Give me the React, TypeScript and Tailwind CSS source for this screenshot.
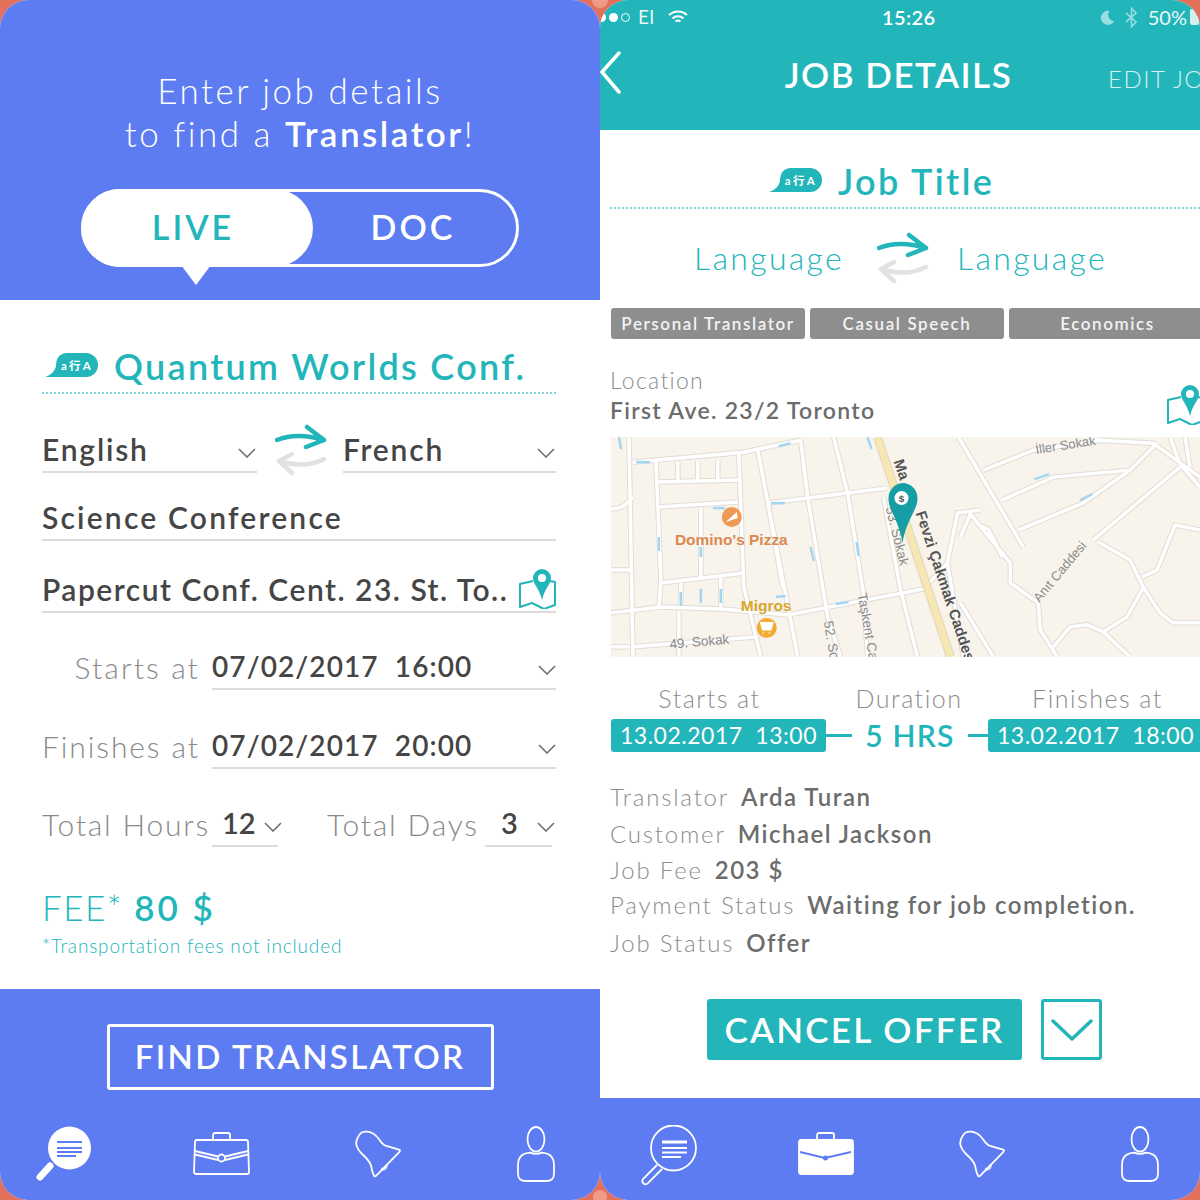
import React from 'react';

const Chevron = ({ className = 'w-[18px] h-[10px] mt-[8px]', color = '#6f6f6f' }: { className?: string; color?: string }) => (
  <svg viewBox="0 0 18 10" className={className} fill="none" stroke={color} strokeWidth="1.6">
    <path d="M1 1l8 8 8-8" />
  </svg>
);

const Bubble = () => (
  <svg viewBox="0 0 53 26" className="w-[53px] h-[26px] shrink-0">
    <path d="M22 0h19a12 12 0 0 1 0 24H0c6-2 10-6 11-11C11 5 15 0 22 0z" fill="#22b5ba" />
    <text x="32" y="16.5" textAnchor="middle" fontSize="11.5" fontWeight="700" fill="#fff" fontFamily="'Lato','Noto Sans CJK SC',sans-serif">a行A</text>
  </svg>
);

const Swap = () => (
  <svg viewBox="0 0 52 52" className="w-[52px] h-[52px] shrink-0" fill="none" strokeLinecap="round" strokeLinejoin="round" strokeWidth="4.5">
    <path d="M2 16Q22 8 49 16M32 3l17 13-18 7" stroke="#22b5ba" />
    <path d="M49 35Q30 45 4 37M17 30L4 37l13 12" stroke="#e2e2e2" />
  </svg>
);

const MapPinIcon = () => (
  <svg viewBox="0 0 38 40" className="w-[38px] h-[40px] shrink-0">
    <path d="M15 12L2 15v23l12-4 12 6 11-4V13l-5-1" fill="none" stroke="#22b5ba" strokeWidth="2" strokeLinejoin="round" />
    <path d="M24 0a9 9 0 0 1 9 9c0 6-6 10-9 22-3-12-9-16-9-22a9 9 0 0 1 9-9z" fill="#22b5ba" />
    <circle cx="24" cy="9" r="4" fill="#fff" />
  </svg>
);

const SearchIcon = ({ active }: { active: boolean }) => (
  <svg viewBox="0 0 60 70" className="w-[60px] h-[70px]" fill="none">
    {active ? (
      <>
        <ellipse cx="34.5" cy="23" rx="21.5" ry="21.5" fill="#fff" />
        <path d="M15 41L5 52" stroke="#fff" strokeWidth="7" strokeLinecap="round" />
        <path d="M22 17h25M22 23h25M22 27h25M22 31h19" stroke="#5d7cf2" strokeWidth="2" />
      </>
    ) : (
      <>
        <ellipse cx="34.5" cy="23" rx="22.5" ry="22.5" stroke="#fff" strokeWidth="1.8" />
        <path d="M18 40L4 54a3 3 0 0 0 5 4l14-14" stroke="#fff" strokeWidth="1.8" />
        <path d="M23 17h25" stroke="#fff" strokeWidth="3" />
        <path d="M23 23h25M23 27.500h25M23 32h19" stroke="#fff" strokeWidth="2" />
      </>
    )}
  </svg>
);

const CaseIcon = ({ active }: { active: boolean }) => (
  <svg viewBox="0 0 60 70" className="w-[60px] h-[70px]" fill="none" stroke="#fff" strokeWidth="1.8">
    <path d="M21 15v-5a2 2 0 0 1 2-2h13a2 2 0 0 1 2 2v5" />
    {active ? (
      <>
        <rect x="3" y="15" width="54" height="34" rx="2.5" fill="#fff" />
        <path d="M4 27l25 6 26-6" stroke="#5d7cf2" />
        <circle cx="29.5" cy="33" r="2.5" fill="#5d7cf2" stroke="none" />
      </>
    ) : (
      <>
        <path d="M5 15h49a2 2 0 0 1 2 2l1 30a2 2 0 0 1-2 2H4a2 2 0 0 1-2-2l1-30a2 2 0 0 1 2-2z" />
        <path d="M3 26l23 5.500M33 31.500L56 26M3 29.500l23 5.500M33 35L56 29.500" />
        <circle cx="29.500" cy="33" r="3.500" />
      </>
    )}
  </svg>
);

const BellIcon = () => (
  <svg viewBox="0 0 60 70" className="w-[60px] h-[70px] -ml-[2px]" fill="none" stroke="#fff" strokeWidth="1.8" strokeLinejoin="round">
    <path d="M12 9Q14 6.300 18 6.700Q25 6.300 31 14.200Q35 20.300 39 21.200L51 24.700Q53 25.500 51 27.300L28 50.800Q27 52.100 26 50.800Q24 46.400 23 40.300Q21 35.100 14 29Q6 21.200 9 14.200Q10 11.600 12 9Z" />
    <path d="M33 44.300Q38 44.700 38.500 39.900" strokeWidth="3" strokeOpacity="0.75" />
  </svg>
);

const UserIcon = () => (
  <svg viewBox="0 0 60 70" className="w-[60px] h-[70px]" fill="none" stroke="#fff" strokeWidth="1.8">
    <ellipse cx="30" cy="14.300" rx="8.500" ry="12.300" />
    <path d="M24 27.700Q30 30 36 27.700Q48 28.500 48 40.300V49Q48 56 40 56H20Q12 56 12 49V40.300Q12 28.500 24 27.700Z" />
  </svg>
);

const TabBar = ({ active }: { active: 'search' | 'jobs' }) => (
  <div className="flex justify-center h-[70px]">
    <div className="w-[157px] shrink-0 flex justify-center"><SearchIcon active={active === 'search'} /></div>
    <div className="w-[157px] shrink-0 flex justify-center"><CaseIcon active={active === 'jobs'} /></div>
    <div className="w-[157px] shrink-0 flex justify-center"><BellIcon /></div>
    <div className="w-[157px] shrink-0 flex justify-center"><UserIcon /></div>
  </div>
);

const Field = ({ className = '', children }: { className?: string; children: React.ReactNode }) => (
  <div className={`h-[46px] flex items-center border-b-2 border-[#dcdcdc] text-[#454545] font-semibold ${className}`}>
    {children}
  </div>
);

const roads = [
  'M18 0L22 220', 'M0 72C12 72 18 65 22 60', 'M0 133H20', 'M0 176L50 170L110 172L177 178L313 152L337 126',
  'M22 25L133 15L190 3', 'M45 23L50 143L48 170', 'M67 25V45', 'M87 24V44', 'M107 23V43', 'M47 45L127 43', 'M48 70L127 65',
  'M90 71V143', 'M128 15L133 150L150 220', 'M147 13L187 220', 'M190 3L197 60L217 180L230 220', 'M223 0L237 56L253 157L257 220',
  'M157 66L277 51', 'M273 60L290 153L307 220', 'M50 146L133 136', 'M70 146V172', 'M110 140V172', 'M23 210L147 200', 'M68 175V220',
  'M157 66L172 150', 'M0 210H18',
  'M348 0L413 110', 'M373 33L423 13L490 3L543 6L590 40', 'M392 63L443 40L520 33', 'M408 93L473 66L520 33L547 6',
  'M483 103L570 30', 'M350 100L360 77L400 126L400 146L428 166L430 193L447 220', 'M368 88L378 92L392 120',
  'M488 105L520 123L533 150L550 176L563 186L590 186', 'M532 140L547 133L565 88L590 93',
  'M533 151L517 180L493 195L477 188L460 190L443 210', 'M493 195L520 220', 'M570 27L590 50', 'M350 166L383 220',
  'M370 73L347 76L337 126L353 220', 'M560 0L570 27', 'M575 0L580 30', 'M480 0L490 3',
];

const arrows = ['M25 25h14', 'M160 66h14', 'M102 71h12', 'M48 100v14', 'M90 110v10', 'M200 110l3 14', 'M246 105l2 14', 'M70 155v14', 'M90 152v14', 'M110 152v14', 'M225 167l13-2', 'M165 160l10-1', 'M168 9l12-3', 'M257 0l4 12', 'M8 0l2 12', 'M424 42l15-5', 'M470 63l12-6'];

const StreetMap = () => (
  <svg viewBox="0 0 590 220" className="block w-full h-[220px]" fontFamily="'Liberation Sans',sans-serif">
    <rect width="590" height="220" fill="#f8f4ec" />
    {roads.map((d) => <path key={d} d={d} fill="none" stroke="#e0ddd6" strokeWidth="5.500" />)}
    {roads.map((d) => <path key={d + 'w'} d={d} fill="none" stroke="#ffffff" strokeWidth="3.500" />)}
    <path d="M267 0L340 220" stroke="#e3dabb" strokeWidth="9" />
    <path d="M267 0L340 220" stroke="#f6e7b4" strokeWidth="6.500" />
    {arrows.map((d) => <path key={d} d={d} stroke="#a3d6f2" strokeWidth="2.500" />)}
    <text transform="translate(283 24) rotate(71.500)" fontSize="15" fontWeight="700" fill="#555">Ma</text>
    <text transform="translate(305 76) rotate(71.500)" fontSize="15" fontWeight="700" fill="#555">Fevzi Çakmak Caddesi</text>
    <text transform="translate(275 71) rotate(76)" fontSize="13.500" fill="#8a8a8a">53. Sokak</text>
    <text transform="translate(213 185) rotate(80)" fontSize="13.500" fill="#8a8a8a">52. Sokak</text>
    <text transform="translate(247 157) rotate(80)" fontSize="13.500" fill="#8a8a8a">Taşkent Caddesi</text>
    <text transform="translate(59 212) rotate(-5)" fontSize="13.500" fill="#8a8a8a">49. Sokak</text>
    <text transform="translate(426 17) rotate(-9)" fontSize="13" fill="#8a8a8a">İller Sokak</text>
    <text transform="translate(429 166) rotate(-50)" fontSize="13" fill="#8a8a8a">Anıt Caddesi</text>
    <text x="64" y="108" fontSize="15.500" fontWeight="700" fill="#d9894f">Domino's Pizza</text>
    <text x="130" y="174" fontSize="15.500" fontWeight="700" fill="#d9a62f">Migros</text>
    <circle cx="121" cy="80" r="10" fill="#ee9a55" />
    <path d="M115 85l11-10 1 6z" fill="#fff" />
    <circle cx="156" cy="191" r="10" fill="#f2ab35" />
    <path d="M150 186h12l-2 7h-8zM152 196h1M158 196h1" fill="#fff" stroke="#fff" strokeWidth="1.500" />
    <path d="M292 46a15 15 0 0 1 15 16c0 11-11 20-15 44-4-24-14-33-14-44a15 15 0 0 1 14-16z" fill="#159ea5" />
    <circle cx="291" cy="61" r="7" fill="#fff" />
    <text x="291" y="65" textAnchor="middle" fontSize="10" fontWeight="700" fill="#555">$</text>
  </svg>
);

const InfoRow = ({ label, value }: { label: string; value: string }) => (
  <div className="flex items-center gap-[12px] text-[24px] tracking-[1.8px] leading-none">
    <span className="font-light text-[#8d8d8d]">{label}</span>
    <span className="font-semibold tracking-[1.5px] text-[#6c6c6c]">{value}</span>
  </div>
);

const Chip = ({ label, className = '' }: { label: string; className?: string }) => (
  <div className={`h-[31px] shrink-0 rounded-[3px] bg-[#8e8e8e] flex items-center justify-center text-[17px] font-semibold tracking-[1.600px] text-[#f3f3f3] ${className}`}>
    {label}
  </div>
);

const TimeChip = ({ label }: { label: string }) => (
  <div className="w-[215px] h-[33px] shrink-0 rounded-[3px] bg-[#22b5ba] flex items-center justify-center text-[23px] tracking-[0.5px] whitespace-pre text-white">
    {label}
  </div>
);

const FindForm = () => (
  <div className="relative w-[600px] h-[1200px] shrink-0 flex flex-col rounded-[28px] overflow-hidden bg-white">
    <div className="h-[300px] shrink-0 bg-[#5d7cf2] pt-[69px] flex flex-col items-center">
      <p className="text-center text-[35px] leading-[43px] font-light tracking-[2.500px] text-white">
        Enter job details<br />to find a <span className="font-semibold">Translator</span>!
      </p>
      <div className="relative mt-[34px] w-[438px] h-[78px] rounded-full border-[3px] border-white flex">
        <div className="relative -m-[3px] w-[232px] h-[78px] rounded-full bg-white flex items-center justify-center pr-[8px] pb-[3px] text-[34px] font-semibold tracking-[3px] text-[#22b5ba]">
          LIVE
          <div className="absolute left-[100px] top-[76px] w-0 h-0 border-l-[15px] border-r-[15px] border-t-[20px] border-l-transparent border-r-transparent border-t-white" />
        </div>
        <div className="flex-1 flex items-center justify-center pb-[3px] text-[34px] font-semibold tracking-[3px] text-white">DOC</div>
      </div>
    </div>

    <div className="h-[689px] shrink-0 px-[42px] pt-[45px] [&_*]:shrink-0">
      <div className="w-[514px] h-[49px] flex items-center gap-[16px] border-b-2 border-dotted border-[#7fd6d9] pl-[3px] pb-[5px] text-[36px] font-semibold tracking-[2.300px] text-[#22b5ba] whitespace-nowrap">
        <Bubble />
        <span>Quantum Worlds Conf.</span>
      </div>
      <div className="flex items-end mt-[33px] w-[514px] text-[30px] tracking-[1.800px]">
        <Field className="w-[215px] justify-between pr-[1px]"><span>English</span><Chevron /></Field>
        <div className="w-[86px] h-[46px] pl-[2px] flex items-center justify-center"><Swap /></div>
        <Field className="w-[213px] justify-between pr-[1px]"><span>French</span><Chevron /></Field>
      </div>
      <Field className="mt-[22px] w-[514px] text-[30px] tracking-[2.200px]">Science Conference</Field>
      <Field className="mt-[26px] w-[514px] justify-between text-[30px] tracking-[1.500px] whitespace-nowrap">
        <span>Papercut Conf. Cent. 23. St. To..</span>
        <MapPinIcon />
      </Field>
      <div className="mt-[31px] flex items-end w-[514px] whitespace-pre">
        <span className="w-[170px] pr-[12px] h-[46px] flex items-center justify-end text-[30px] font-light tracking-[2.100px] text-[#8a8a8a]">Starts at</span>
        <Field className="flex-1 justify-between text-[28px] tracking-[1.100px]"><span>07/02/2017  16:00</span><Chevron /></Field>
      </div>
      <div className="mt-[33px] flex items-end w-[514px] whitespace-pre">
        <span className="w-[170px] pr-[12px] h-[46px] flex items-center justify-end text-[30px] font-light tracking-[1.900px] text-[#8a8a8a]">Finishes at</span>
        <Field className="flex-1 justify-between text-[28px] tracking-[1.100px]"><span>07/02/2017  20:00</span><Chevron /></Field>
      </div>
      <div className="mt-[32px] flex items-end w-[514px] whitespace-nowrap">
        <span className="w-[170px] h-[46px] flex items-center text-[30px] font-light tracking-[1.800px] text-[#8a8a8a]">Total Hours</span>
        <Field className="w-[66px] justify-between pl-[10px] text-[29px]"><span>12</span><Chevron className="w-[18px] h-[10px] mt-[8px] -mr-[4px]" /></Field>
        <span className="w-[207px] pl-[49px] h-[46px] flex items-center text-[30px] font-light tracking-[1.800px] text-[#8a8a8a]">Total Days</span>
        <Field className="w-[67px] justify-between pl-[16px] text-[29px]"><span>3</span><Chevron className="w-[18px] h-[10px] mt-[8px] -mr-[3px]" /></Field>
      </div>
      <div className="mt-[40px] h-[40px] flex items-center text-[35px] tracking-[1.500px] text-[#22b5ba]">
        <span className="font-light">FEE*</span>
        <span className="ml-[11px] font-semibold tracking-[3px]">80 $</span>
      </div>
      <p className="mt-[9px] h-[20px] leading-[20px] text-[19px] font-light tracking-[0.850px] text-[#22b5ba]">*Transportation fees not included</p>
    </div>

    <div className="flex-1 bg-[#5d7cf2] pt-[35px]">
      <div className="mx-auto w-[387px] h-[66px] rounded-[3px] border-[3px] border-white flex items-center justify-center text-[33px] font-semibold tracking-[2.300px] text-white whitespace-nowrap">
        FIND TRANSLATOR
      </div>
      <div className="mt-[35px]"><TabBar active="search" /></div>
    </div>
  </div>
);

const JobDetails = () => (
  <div className="relative w-[600px] h-[1200px] shrink-0 flex flex-col rounded-[28px] overflow-hidden bg-white whitespace-nowrap">
    <div className="relative h-[130px] shrink-0 bg-[#22b5ba] text-white">
      <div className="h-[34px] flex items-center justify-between text-[19px]">
        <div className="flex items-center gap-[3px] -ml-[3px]">
          <span className="w-[9px] h-[9px] rounded-full bg-white" />
          <span className="w-[9px] h-[9px] rounded-full bg-white" />
          <span className="w-[9px] h-[9px] rounded-full border border-white" />
          <span className="ml-[5px] tracking-[0.5px] opacity-90">El</span>
          <svg viewBox="0 0 22 16" className="ml-[10px] w-[22px] h-[16px]" fill="none" stroke="#fff" strokeWidth="2">
            <path d="M2 6a13 13 0 0 1 18 0M5.500 9.500a8 8 0 0 1 11 0M8.500 12.500a4 4 0 0 1 5 0" />
          </svg>
        </div>
        <span className="absolute left-[282px] top-[4px] text-[20px] leading-[26px] font-semibold tracking-[0.4px]">15:26</span>
        <div className="flex items-center gap-[10px] mr-[1px] text-[20px]">
          <svg viewBox="0 0 16 16" className="w-[15px] h-[15px]"><path d="M10 1a7.500 7.500 0 1 0 5 11A7 7 0 0 1 10 1z" fill="#9adfe1" /></svg>
          <svg viewBox="0 0 14 22" className="w-[13px] h-[21px]" fill="none" stroke="#9adfe1" strokeWidth="1.600"><path d="M1 6l11 10-5 5V1l5 5L1 16" /></svg>
          <span className="opacity-90">50%</span>
          <span className="-ml-[7px] w-[9px] h-[16px] rounded-[2px] bg-white/80" />
        </div>
      </div>
      <div className="relative h-[84px] flex items-center justify-center pb-[3px] pr-[3px] text-[35px] font-semibold tracking-[1.500px]">
        <svg viewBox="0 0 22 44" className="absolute left-[0px] top-[17px] w-[22px] h-[44px]" fill="none" stroke="#fff" strokeWidth="3.500" strokeLinecap="round" strokeLinejoin="round">
          <path d="M19 2L2 21l17 20" />
        </svg>
        JOB DETAILS
        <span className="absolute left-[508px] top-[27px] text-[24px] font-light tracking-[1.500px] text-[#d7f1f2]">EDIT JOB</span>
      </div>
    </div>

    <div className="h-[968px] shrink-0 pl-[10px] pt-[25px]">
      <div className="w-[590px] h-[54px] flex items-center pl-[159px] gap-[16px] border-b-2 border-dotted border-[#7fd6d9] text-[36px] font-semibold tracking-[2.400px] text-[#22b5ba]">
        <Bubble />
        <span>Job Title</span>
      </div>
      <div className="mt-[23px] h-[52px] flex items-center text-[32px] font-light tracking-[2.300px] text-[#22b5ba]">
        <span className="w-[234px] text-right">Language</span>
        <div className="ml-[33px]"><Swap /></div>
        <span className="ml-[28px]">Language</span>
      </div>
      <div className="mt-[24px] ml-[1px] flex gap-[5px] w-[589px]">
        <Chip label="Personal Translator" className="w-[194px]" />
        <Chip label="Casual Speech" className="w-[194px]" />
        <Chip label="Economics" className="w-[197px]" />
      </div>
      <div className="mt-[20px] h-[66px] w-[590px] flex justify-between items-end">
        <div className="text-[23px] tracking-[1.300px] leading-[30px]">
          <div className="font-light text-[#8d8d8d]">Location</div>
          <div className="font-semibold text-[#6c6c6c]">First Ave. 23/2 Toronto</div>
        </div>
        <div className="-mr-[4px]"><MapPinIcon /></div>
      </div>
      <div className="ml-[1px] mt-[12px] w-[589px] h-[220px]"><StreetMap /></div>

      <div className="mt-[27px] flex w-[590px] text-[25px] font-light tracking-[1.500px] text-[#8d8d8d] leading-[28px]">
        <span className="w-[199px] text-center">Starts at</span>
        <span className="w-[200px] text-center">Duration</span>
        <span className="w-[177px] text-center">Finishes at</span>
      </div>
      <div className="mt-[1px] flex items-center ml-[1px] w-[600px]">
        <TimeChip label="13.02.2017  13:00" />
        <div className="w-[26px] h-[3px] bg-[#22b5ba]" />
        <span className="w-[116px] text-center text-[30px] font-semibold tracking-[1.200px] text-[#22b5ba]">5 HRS</span>
        <div className="w-[20px] h-[3px] bg-[#22b5ba]" />
        <TimeChip label="13.02.2017  18:00" />
      </div>

      <div className="mt-[26px] h-[26px] flex items-center"><InfoRow label="Translator" value="Arda Turan" /></div>
      <div className="mt-[11px] h-[26px] flex items-center"><InfoRow label="Customer" value="Michael Jackson" /></div>
      <div className="mt-[10px] h-[26px] flex items-center"><InfoRow label="Job Fee" value="203 $" /></div>
      <div className="mt-[9px] h-[26px] flex items-center"><InfoRow label="Payment Status" value="Waiting for job completion." /></div>
      <div className="mt-[12px] h-[26px] flex items-center"><InfoRow label="Job Status" value="Offer" /></div>

      <div className="mt-[43px] flex items-center pl-[97px] gap-[19px]">
        <div className="w-[315px] h-[61px] rounded-[3px] bg-[#22b5ba] flex items-center justify-center text-[35px] font-semibold tracking-[2.200px] text-white">CANCEL OFFER</div>
        <div className="w-[61px] h-[61px] rounded-[3px] border-[3px] border-[#22b5ba] flex items-center justify-center">
          <svg viewBox="0 0 42 24" className="w-[42px] h-[24px]" fill="none" stroke="#22b5ba" strokeWidth="3.500" strokeLinecap="round" strokeLinejoin="round">
            <path d="M2 3l19 18L40 3" />
          </svg>
        </div>
      </div>
    </div>

    <div className="flex-1 bg-[#5d7cf2] pt-[27px] pl-[8px]">
      <TabBar active="jobs" />
    </div>
  </div>
);

export default function App() {
  return (
    <div className="relative w-[1200px] h-[1200px] flex overflow-hidden bg-[#e2705a] font-['Lato',sans-serif]">
      <div className="absolute left-[592px] -top-[8px] w-[16px] h-[16px] rounded-full bg-[#f09a88]" />
      <div className="absolute left-[593px] top-[1190px] w-[14px] h-[14px] rounded-full bg-[#f09a88]" />
      <FindForm />
      <JobDetails />
    </div>
  );
}
